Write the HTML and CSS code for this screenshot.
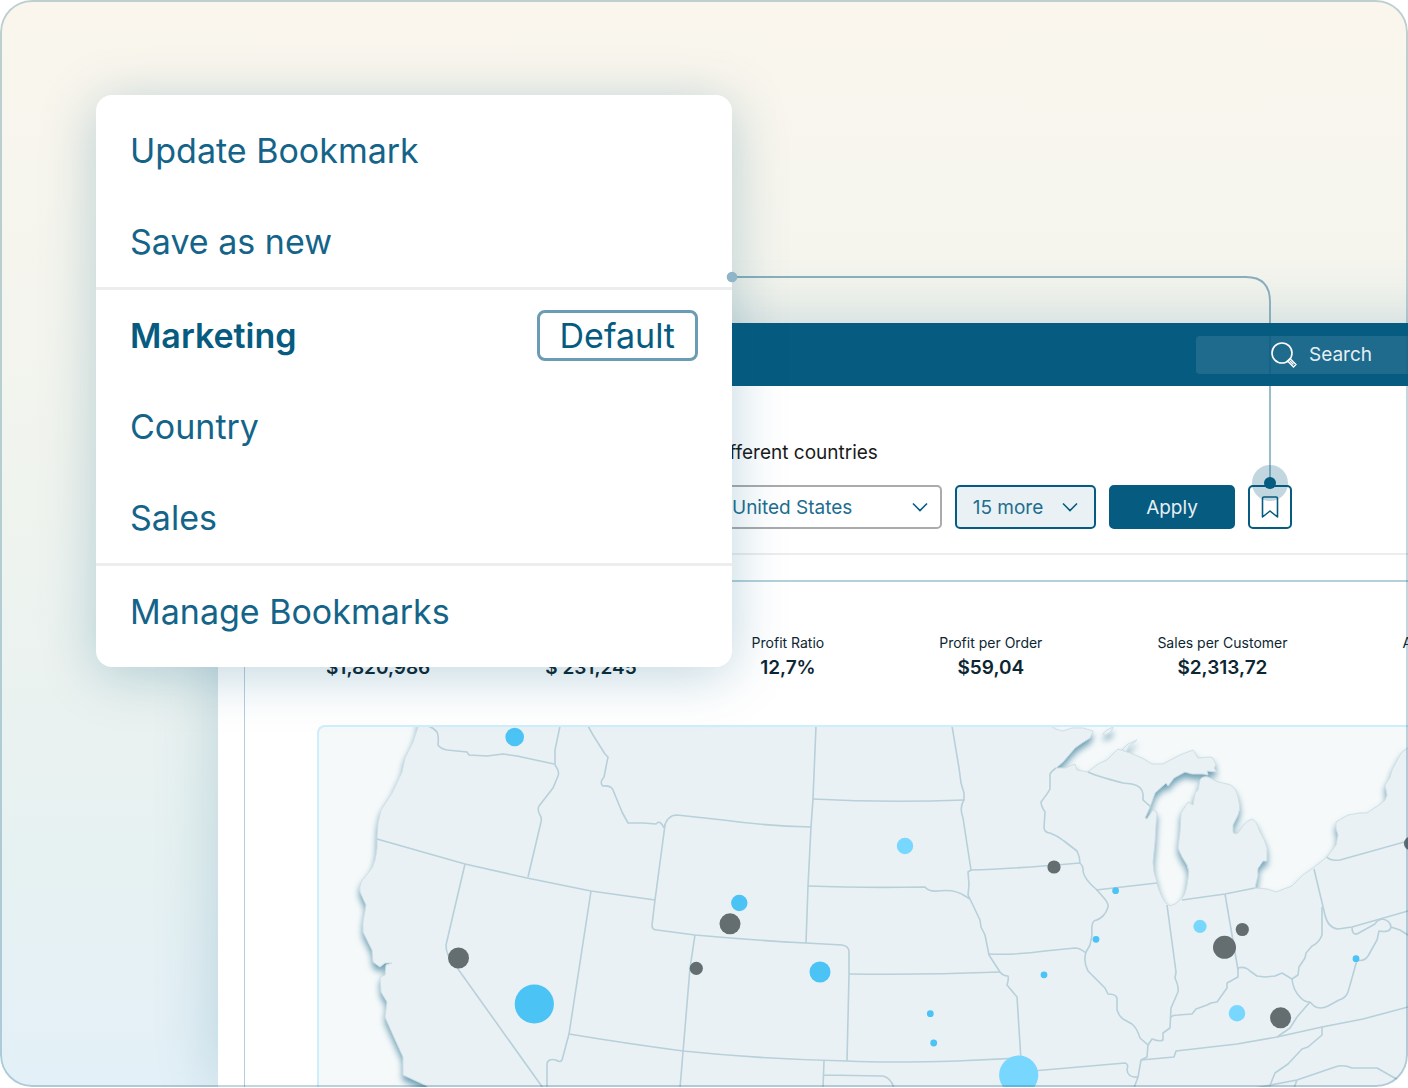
FILE: index.html
```html
<!DOCTYPE html>
<html lang="en">
<head>
  <meta charset="UTF-8" />
  <meta name="viewport" content="width=device-width, initial-scale=1.0" />
  <title>Bookmarks</title>
  <link rel="stylesheet" href="styles.css">
</head>
<body>
  <div class="stage">

    <main class="dashboard">
      <header class="topbar">
        <label class="search">
          <svg width="28" height="28" viewBox="0 0 28 28" fill="none" stroke="currentColor" stroke-width="1.6" aria-hidden="true">
            <circle cx="13" cy="12" r="10" />
            <path d="M18.500 20l2.500-2.500 6 6-2.500 2.500z M21 20l3.500 3.500" stroke-width="1.300" />
          </svg>
          <input type="search" placeholder="Search" aria-label="Search">
        </label>
      </header>

      <section class="toolbar">
        <label class="toolbar-text" for="country">different countries</label>
        <div class="filters">
          <div class="select-box">
            <select id="country">
              <option>United States</option>
              <option>Canada</option>
            </select>
            <svg class="chevron" width="16" height="10" viewBox="0 0 16 10"><path d="M1 1.500l7 7 7-7" /></svg>
          </div>
          <button class="btn more" type="button">15 more
            <svg class="chevron" width="16" height="10" viewBox="0 0 16 10"><path d="M1 1.500l7 7 7-7" /></svg>
          </button>
          <button class="btn apply" type="button">Apply</button>
          <button class="btn mark" type="button" aria-label="Bookmarks">
            <svg width="18" height="22" viewBox="0 0 18 22" fill="none" stroke="currentColor" stroke-width="1.600" stroke-linejoin="round"><path d="M1.500 2.500q0-1.500 1.500-1.500h12q1.500 0 1.500 1.500v18.500l-7.500-6-7.500 6z" /></svg>
          </button>
        </div>
      </section>

      <section class="panel">
        <div class="kpis">
          <div class="kpi"><span>Sales</span><strong>$1,820,986</strong></div>
          <div class="kpi"><span>Profit</span><strong>$ 231,245</strong></div>
          <div class="kpi"><span>Profit Ratio</span><strong>12,7%</strong></div>
          <div class="kpi"><span>Profit per Order</span><strong>$59,04</strong></div>
          <div class="kpi"><span>Sales per Customer</span><strong>$2,313,72</strong></div>
          <div class="kpi"><span>Average Discount</span><strong>15,6%</strong></div>
        </div>

        <div class="map">
          <svg width="1092" height="362" viewBox="319 727 1092 362" role="img" aria-label="Sales map">
            <path class="land small" d="M1103 734l4-4 6-3-2 5-6 3z M1122 750l6-6 9-4-8 6-3 6z" />
            <path class="land" d="M418 720L418 727 413 742 405 758 402 772 392 793 381 810Q377 822 377 838L377 848Q376 860 372 868L361 882Q359 888 360 892L366 905 363 922 363 932 372 950 373 962 380 967 385 963 392 963 386 965 385 975 380 977 381 992 387 1002 385 1017 393 1035 403 1057 403 1075 427 1086 430 1100 1420 1100
              1420 744 1408 748Q1402 751 1400 755L1392 770Q1391 778 1385 785L1387 795Q1386 800 1382 803L1367 813 1360 813 1348 815 1336 822Q1335 828 1338 835L1336 845 1327 857 1313 868 1303 875 1292 886 1276 892 1267 889 1255 888
              1258 875Q1257 868 1259 867L1263 861 1267 861 1267 848Q1265 840 1260 832 1256 820 1252 819 1247 820 1242 827L1238 833Q1234 835 1233 832L1233 825 1238 815Q1241 808 1239 802 1237 790 1233 787 1230 784 1227 784L1218 782 1208 777Q1202 776 1200 780L1198 790 1195 793 1193 805 1188 802 1181 813 1180 832 1178 848Q1182 858 1187 865 1190 872 1188 878 1186 895 1182 898 1176 905 1170 906 1165 904 1162 897 1157 886 1157 882 1153 872 1153 862L1155 842 1156 825 1157 812 1153 810 1147 819 1145 818 1150 807 1155 793 1166 783 1168 786 1174 778 1185 772 1192 774 1203 774 1208 775 1207 771 1217 772 1214 768 1216 765 1213 758 1210 757 1198 758 1193 750 1180 755 1163 764 1152 764 1142 758 1130 753 1118 749 1107 760 1098 764 1088 772 1077 770 1075 764 1065 768 1056 768 1063 762 1075 748 1082 743 1090 738 1093 731 1083 728 1072 728 1063 731 1055 729 1050 725 1050 720z" />
            <g class="borders">
              <path d="M428 726Q434 728 437 732 439 736 438 745 441 749 447 750L467 752 469 755 487 756 503 754 517 756 554 764" />
              <path d="M560 726L555 750 555 765Q560 772 558 776L553 788 539 806Q537 810 540 815 542 818 541 822L528 877" />
              <path d="M377 839L465 864 527 878 591 891 655 900" />
              <path d="M465 864L446 945Q446 950 448 955L458 969 543 1088" />
              <path d="M591 891L569 1034 562 1060Q560 1063 556 1060 547 1058 547 1065L547 1088" />
              <path d="M569 1034Q623 1043 683 1051 760 1059 847 1061 887 1063 957 1061L1021 1058" />
              <path d="M588 726L593 735 605 754 608 757 604 777Q599 783 603 786 611 785 613 790L622 812 628 823 643 823 656 824Q660 819 664 828" />
              <path d="M665 825L655 900 652 925Q652 930 657 930L695 935Q750 940 806 943L842 945Q849 946 849 952L849 975 847 1061" />
              <path d="M664 828Q667 815 677 815L723 820Q767 826 811 827" />
              <path d="M816 726L813 799 811 827 808 886 806 943" />
              <path d="M813 799Q887 803 964 800" />
              <path d="M808 886Q860 888 925 887 929 892 938 891 955 889 965 896L970 899" />
              <path d="M952 726L959 768 961 783 964 793 964 800Q959 807 963 818L971 870 968 872 969 885 968 895 970 899 980 920 981 927 985 935 989 955 1000 972Q1003 976 1008 976 1009 979 1007 985L1017 997 1021 1060" />
              <path d="M695 935L690 968 680 1088" />
              <path d="M849 974Q923 975 1000 972" />
              <path d="M824 1061L823 1088M823 1075L883 1076Q891 1078 894 1088" />
              <path d="M971 870Q1010 869 1080 863" />
              <path d="M1056 768Q1049 773 1050 776L1050 789Q1048 793 1041 802 1041 806 1045 812L1044 828Q1045 833 1050 833 1058 836 1064 841L1077 851Q1080 857 1080 863 1084 867 1083 871 1084 879 1096 889L1104 898Q1109 904 1108 907 1105 918 1094 921 1091 924 1092 935L1090 945 1086 952Q1083 962 1088 971L1105 988 1108 994Q1116 994 1117 998L1117 1010Q1119 1016 1123 1019L1132 1024Q1137 1028 1140 1038L1148 1045 1147 1057 1141 1060 1138 1077 1134 1088" />
              <path d="M1088 772Q1093 775 1123 783L1132 784Q1142 786 1143 794L1143 800 1151 807" />
              <path d="M1096 890L1157 883" />
              <path d="M1167 905L1176 972 1175 978Q1179 987 1178 992L1171 1008 1170 1028 1163 1033 1163 1040Q1160 1042 1152 1039L1148 1045" />
              <path d="M989 954Q1017 955 1045 951L1075 948Q1080 948 1086 953" />
              <path d="M1021 1072L1125 1063Q1129 1064 1127 1070 1128 1078 1138 1077" />
              <path d="M1141 1060L1174 1057 1176 1051 1237 1044 1277 1037 1322 1027 1363 1019 1408 1007" />
              <path d="M1170 1018Q1172 1015 1178 1015L1192 1014 1196 1009 1207 1005 1211 1003 1217 1002 1227 988 1227 983 1238 977 1238 968Q1245 966 1250 971L1257 976 1265 977 1275 976 1282 973 1292 979 1298 975 1299 967 1305 958 1306 953 1312 946Q1319 943 1322 935L1322 907" />
              <path d="M1225 894L1238 970M1182 900L1225 894 1255 888" />
              <path d="M1314 869L1325 915Q1328 928 1338 929L1352 927 1408 911" />
              <path d="M1327 857Q1330 861 1340 860L1408 841" />
              <path d="M1352 927Q1352 935 1357 934L1375 924Q1377 920 1382 919 1390 920 1391 927 1390 933 1379 931L1377 940 1368 956Q1364 962 1357 960L1352 978 1348 992Q1346 998 1339 1000L1328 1006Q1320 1010 1314 1006L1310 1002Q1304 1002 1300 997 1293 990 1292 979M1391 927L1400 930 1408 935" />
              <path d="M1310 1002L1297 1017 1290 1028 1277 1037" />
              <path d="M1322 1027L1322 1035 1308 1047 1302 1049 1288 1064 1275 1073 1269 1088" />
              <path d="M1255 1088L1297 1080 1335 1067Q1343 1064 1352 1068L1377 1068 1400 1081M1297 1080L1294 1088" />
            </g>
            <g class="blue">
              <circle cx="514.700" cy="737" r="9.300" />
              <circle cx="534.300" cy="1004" r="19.600" />
              <circle cx="739.300" cy="903" r="8.200" />
              <circle cx="820" cy="972" r="10.500" />
              <circle cx="930.300" cy="1013.700" r="3.400" />
              <circle cx="933.700" cy="1043" r="3.400" />
              <circle cx="1115.600" cy="890.700" r="3.400" />
              <circle cx="1096" cy="939.300" r="3.400" />
              <circle cx="1044" cy="974.800" r="3.400" />
              <circle cx="1356" cy="958.700" r="3.400" />
            </g>
            <g class="sky">
              <circle cx="905" cy="846" r="8.200" />
              <circle cx="1018.700" cy="1075" r="19.600" />
              <circle cx="1200" cy="926.300" r="6.600" />
              <circle cx="1237" cy="1013.300" r="8.200" />
            </g>
            <g class="gray">
              <circle cx="458.500" cy="958" r="10.500" />
              <circle cx="730" cy="923.800" r="10.500" />
              <circle cx="696.300" cy="968.300" r="6.600" />
              <circle cx="1054" cy="867" r="6.600" />
              <circle cx="1242.300" cy="929.500" r="6.600" />
              <circle cx="1224.500" cy="947.300" r="11.500" />
              <circle cx="1280.600" cy="1017.800" r="10.500" />
              <circle cx="1410.500" cy="843.500" r="6.600" />
            </g>
          </svg>
        </div>
      </section>
    </main>

    <nav class="menu">
      <div class="menu-group">
        <button type="button">Update Bookmark</button>
        <button type="button">Save as new</button>
      </div>
      <div class="menu-group">
        <button class="active" type="button">Marketing <span class="badge">Default</span></button>
        <button type="button">Country</button>
        <button type="button">Sales</button>
      </div>
      <div class="menu-group">
        <button type="button">Manage Bookmarks</button>
      </div>
    </nav>

    <svg class="connector" width="562" height="232" viewBox="0 0 562 232" aria-hidden="true">
      <path d="M6 7H520Q544 7 544 32V213" fill="none" stroke="#065b80" stroke-opacity=".45" stroke-width="1.800" />
      <circle cx="6" cy="7" r="5.300" fill="#8fb5c8" />
      <circle cx="544" cy="213" r="18" fill="#065b80" fill-opacity=".25" />
      <circle cx="544" cy="213" r="6" fill="#065b80" />
    </svg>
  </div>
</body>
</html>
```

FILE: styles.css
```css
* {
  box-sizing: border-box;
}
body {
  margin: 0;
  background: #fff;
  font-family: Inter, "Liberation Sans", sans-serif;
  font-size: 19px;
  color: #065b80;
}
button, input, select {
  font: inherit;
  color: inherit;
}
button {
  cursor: pointer;
}
.stage {
  position: relative;
  display: flex;
  height: calc(100vh - 1px);
  padding: 323px 0 0 218px;
  border-radius: 32px;
  overflow: hidden;
  background: linear-gradient(#faf6ed, #f1f4ee 40%, #e6f1f1 78%, #e3f0f7);
}
/* outline goes over the content so it tints whatever is under it */
.stage::after {
  content: "";
  position: absolute;
  inset: 0;
  border: 2px solid rgba(6, 91, 128, 0.25);
  border-radius: 32px;
  pointer-events: none;
}

/* dashboard */
.dashboard {
  flex: 1;
  display: flex;
  flex-direction: column;
  min-width: 0;
  margin-right: -60px;
  background: #fff;
  box-shadow: 0 0 60px rgba(6, 91, 128, 0.2);
}
.topbar {
  display: flex;
  justify-content: flex-end;
  align-items: center;
  height: 63px;
  padding-right: 22px;
  background: #065b80;
}
.search {
  display: flex;
  align-items: center;
  gap: 12px;
  width: 250px;
  height: 38px;
  padding-left: 73px;
  border-radius: 4px;
  background: rgba(255, 255, 255, 0.1);
  color: #fff;
}
.search svg {
  flex: none;
}
.search input {
  width: 100px;
  padding: 0;
  border: 0;
  outline: 0;
  background: none;
}
.search input::placeholder {
  color: #e6eff3;
  opacity: 1;
}
.toolbar {
  padding: 55px 0 24px 495px;
  border-bottom: 2px solid #ebedef;
}
.toolbar-text {
  display: block;
  margin-bottom: 20px;
  line-height: 24px;
  color: #1a1a1a;
}
.filters {
  display: flex;
  gap: 13px;
}
.select-box {
  position: relative;
}
.select-box select {
  width: 229px;
  height: 44px;
  padding: 0 40px 0 17px;
  border: 2px solid #a9abac;
  border-radius: 5px;
  background: #fff;
  appearance: none;
}
.select-box .chevron {
  position: absolute;
  right: 14px;
  top: 17px;
  pointer-events: none;
}
.chevron {
  fill: none;
  stroke: #065b80;
  stroke-width: 1.6;
}
.select-box select, .more {
  color: #216d8f;
}
.btn {
  display: flex;
  align-items: center;
  justify-content: center;
  height: 44px;
  padding: 0;
  border: 2px solid #065b80;
  border-radius: 5px;
  background: #fff;
}
.more {
  gap: 19px;
  width: 141px;
  background: #e9f1f5;
}
.apply {
  width: 126px;
  background: #065b80;
  color: #e6eff3;
}
.mark {
  width: 44px;
}
.panel {
  flex: 1;
  display: flex;
  flex-direction: column;
  min-height: 0;
  margin: 25px 0 0 26px;
  padding-left: 72px;
  border: 2px solid #b4d0da;
  border-width: 2px 0 0 1px;
}
.kpis {
  display: flex;
  gap: 115px;
  padding: 49px 0 44px 9px;
  overflow: hidden;
  white-space: nowrap;
}
.kpi {
  display: flex;
  flex-direction: column;
  align-items: center;
  color: #0c2632;
}
.kpi span {
  font-size: 14px;
  line-height: 24px;
}
.kpi strong {
  font-size: 19px;
  font-weight: 600;
  line-height: 26px;
}
.map {
  flex: 1;
  min-height: 0;
  border: 2px solid #cdeefc;
  border-width: 2px 0 0 2px;
  border-radius: 8px 0 0 0;
  background: #f5f9fa;
  overflow: hidden;
}
.map svg {
  display: block;
}
.land {
  fill: #e9f1f5;
  stroke: #cfdfe4;
  stroke-width: 1;
  filter: drop-shadow(0 5px 3px rgba(6, 91, 128, 0.55));
}
.borders {
  fill: none;
  stroke: #b7d0d9;
  stroke-width: 1.6;
  stroke-linejoin: round;
}
.blue { fill: #4bc3f5; }
.sky { fill: #77d7ff; }
.gray { fill: #646e70; }

/* bookmark menu */
.menu {
  position: absolute;
  left: 96px;
  top: 95px;
  width: 636px;
  padding: 10px 0;
  border-radius: 16px;
  background: #fff;
  box-shadow: 0 8px 54px rgba(6, 91, 128, 0.25);
}
.menu-group + .menu-group {
  border-top: 3px solid #ebedef;
}
.menu button {
  display: flex;
  align-items: center;
  justify-content: space-between;
  width: 100%;
  height: 91px;
  padding: 0 34px 1px;
  border: 0;
  background: none;
  font-size: 34px;
  color: #14648a;
  text-align: left;
}
.menu button.active {
  font-weight: 600;
  color: #065b80;
}
.badge {
  padding: 0 20px;
  border: 3px solid #6a9cb3;
  border-radius: 8px;
  font-weight: 400;
  line-height: 45px;
}
.connector {
  position: absolute;
  left: 726px;
  top: 270px;
  pointer-events: none;
}
```
